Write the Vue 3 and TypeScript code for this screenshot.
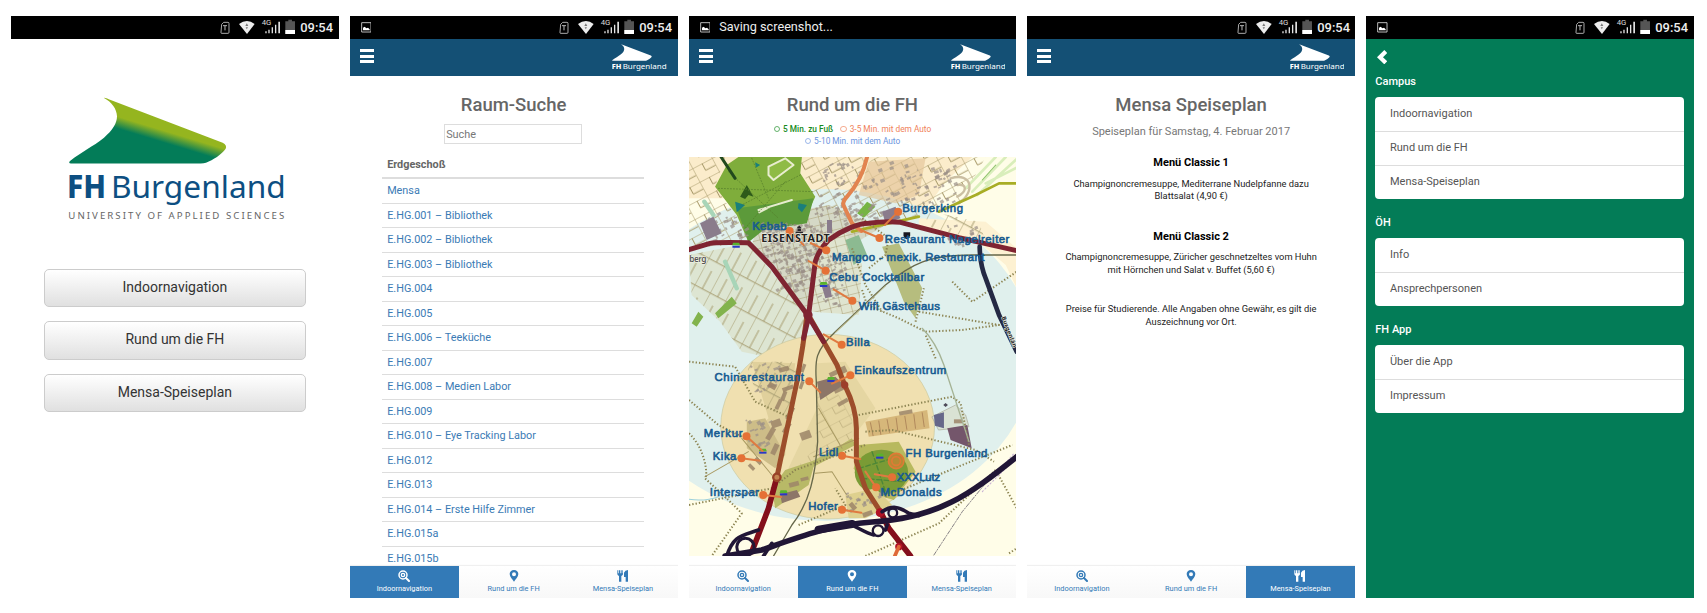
<script setup lang="ts">
type Kind = 'home' | 'rooms' | 'map' | 'menu' | 'drawer'

interface Screen {
  kind: Kind
  picture: boolean
  saving?: boolean
  title?: string
}

const screens: Screen[] = [
  { kind: 'home', picture: false },
  { kind: 'rooms', picture: true, title: 'Raum-Suche' },
  { kind: 'map', picture: true, saving: true, title: 'Rund um die FH' },
  { kind: 'menu', picture: false, title: 'Mensa Speiseplan' },
  { kind: 'drawer', picture: true },
]

const tabs: { kind: Kind; label: string }[] = [
  { kind: 'rooms', label: 'Indoornavigation' },
  { kind: 'map', label: 'Rund um die FH' },
  { kind: 'menu', label: 'Mensa-Speiseplan' },
]

const rooms = [
  'Mensa', 'E.HG.001 – Bibliothek', 'E.HG.002 – Bibliothek', 'E.HG.003 – Bibliothek',
  'E.HG.004', 'E.HG.005', 'E.HG.006 – Teeküche', 'E.HG.007', 'E.HG.008 – Medien Labor',
  'E.HG.009', 'E.HG.010 – Eye Tracking Labor', 'E.HG.012', 'E.HG.013',
  'E.HG.014 – Erste Hilfe Zimmer', 'E.HG.015a', 'E.HG.015b',
]

const groups = [
  { name: 'Campus', items: ['Indoornavigation', 'Rund um die FH', 'Mensa-Speiseplan'] },
  { name: 'ÖH', items: ['Info', 'Ansprechpersonen'] },
  { name: 'FH App', items: ['Über die App', 'Impressum'] },
]

// label, text x, baseline, text width, marker x/y, end of the pointer line
type Place = [string, number, number, number, number, number, number, number]
const places: Place[] = [
  ['Kebab', 201, 224, 103, 313, 228, 355, 270],
  ['Burgerking', 650, 172, 182, 638, 170, 598, 210],
  ['Restaurant Nagelreiter', 598, 264, 373, 582, 249, 525, 225],
  ['Mangoo - mexik. Restaurant', 440, 318, 456, 423, 286, 376, 264],
  ['Cebu Cocktailbar', 432, 377, 284, 421, 347, 370, 318],
  ['Wifi Gästehaus', 520, 466, 243, 501, 437, 445, 403],
  ['Billa', 482, 573, 71, 469, 569, 415, 538],
  ['Einkaufszentrum', 507, 656, 275, 495, 661, 440, 686],
  ['Chinarestaurant', 88, 678, 268, 372, 679, 405, 712],
  ['Merkur', 56, 846, 116, 184, 844, 232, 888],
  ['Kika', 83, 915, 71, 169, 910, 225, 917],
  ['Lidl', 401, 904, 58, 470, 902, 525, 912],
  ['FH Burgenland', 660, 906, 245, 632, 918, 632, 918],
  ['XXXLutz', 634, 978, 130, 620, 967, 568, 958],
  ['McDonalds', 585, 1024, 183, 572, 997, 540, 950],
  ['Interspar', 74, 1024, 148, 234, 1020, 288, 1026],
  ['Hofer', 369, 1064, 88, 470, 1064, 528, 1073],
]

const busStops = [[153, 272], [415, 390], [437, 675], [233, 890], [583, 905], [295, 1015]]

// deterministic scatter of building footprints inside a box
function scatter(x: number, y: number, w: number, h: number, count: number, seed: number) {
  let s = seed * 7919
  const next = () => ((s = (s * 16807) % 2147483647) / 2147483647)
  return Array.from({ length: count }, () => ({
    x: x + next() * w, y: y + next() * h, w: 4 + next() * 10, h: 4 + next() * 7, r: -35 + next() * 20,
  }))
}
const buildings = [
  ...scatter(225, 205, 190, 115, 170, 11),
  ...scatter(270, 320, 100, 85, 55, 5),
  ...scatter(385, 150, 200, 60, 45, 21),
  ...scatter(395, 300, 80, 150, 55, 8),
  ...scatter(60, 170, 120, 90, 35, 3),
  ...scatter(400, 20, 230, 130, 55, 15),
  ...scatter(640, 30, 170, 120, 50, 33),
  ...scatter(780, 200, 90, 70, 22, 18),
  ...scatter(190, 620, 90, 90, 20, 12),
  ...scatter(180, 790, 70, 90, 20, 7),
  ...scatter(480, 1005, 100, 60, 24, 10),
]
// larger halls: x, y, width, height, rotation
const halls = [
  [280, 640, 30, 14, -15], [255, 680, 24, 16, 30], [290, 700, 34, 12, -20], [285, 735, 30, 12, -70],
  [268, 760, 32, 12, -65], [300, 790, 40, 14, -65], [255, 800, 30, 22, -20], [290, 830, 34, 14, -60],
  [240, 850, 40, 15, -60], [255, 895, 34, 15, -65], [345, 650, 26, 10, -70], [340, 700, 24, 10, -70],
  [398, 700, 34, 16, -25], [430, 655, 30, 14, -25], [460, 640, 20, 20, -25], [445, 705, 40, 12, -25],
  [455, 745, 34, 12, -30], [342, 835, 32, 24, -20], [215, 905, 24, 12, 45], [195, 925, 22, 10, 45],
  [310, 985, 30, 14, -15], [345, 970, 24, 10, -15], [500, 1040, 24, 14, 50], [530, 1075, 30, 14, -20],
  [640, 770, 40, 12, -10], [805, 793, 26, 12, 0],
]
</script>

<template>
  <main class="board">
    <!-- shared logo artwork -->
    <svg class="defs" width="0" height="0" aria-hidden="true">
      <defs>
        <linearGradient id="sail" gradientUnits="userSpaceOnUse" x1="354" y1="350" x2="344" y2="383">
          <stop offset="0" stop-color="#95b51f" />
          <stop offset="1" stop-color="#037c58" />
        </linearGradient>
        <path id="sail-shape" d="M312 293.5Q318 294 330 299L668 428Q682 435 677 446C664 464 640 479 618 488Q612 490.500 602 490.500H213Q203 489 211 482C245 455 278 440 312 413C338 391 351 370 351 349C350 327 336 306 312 294Z" />
      </defs>
    </svg>

    <section v-for="s in screens" :key="s.kind" class="phone" :class="s.kind">
      <div class="status">
        <svg v-if="s.picture" class="pic" viewBox="0 0 32 32">
          <path d="M2 2H30V30H2Z" fill="none" stroke="#ddd" stroke-width="2.500" />
          <path d="M6 25V17L11 14L16 19L21 17L26 22V25Z" fill="#fff" />
        </svg>
        <span v-if="s.saving" class="saving">Saving screenshot...</span>
        <svg v-else class="signals" viewBox="653 48 364 69">
          <path d="M667 73L673 67H686Q689 67 689 70V97Q689 100 686 100H667Q664 100 665 97Z" fill="none" stroke="#ccc" stroke-width="2.500" />
          <path d="M671 77H683M677 78V91" stroke="#bbb" stroke-width="3" />
          <path d="M719 72Q743 54 766 72L743 102Z" fill="#ededed" />
          <path d="M738 78L742.500 70L747 78ZM739 82L742.500 88L746 82Z" fill="#777" />
          <text x="787" y="74" font-size="19" textLength="29" lengthAdjust="spacingAndGlyphs" fill="#ddd">4G</text>
          <path d="M798 94H802V100H798ZM807 89H811V100H807ZM817 82H821V100H817ZM827 74H831V100H827ZM837 65H842V100H837Z" fill="#e4e4e4" />
          <path d="M858 64H867V59H878V64H887V102H858Z" fill="#555" />
          <path d="M858 90H887V102H858Z" fill="#fff" />
          <text x="903" y="97" font-size="40" font-weight="500" textLength="98" lengthAdjust="spacingAndGlyphs" fill="#eee">09:54</text>
        </svg>
      </div>

      <template v-if="s.kind === 'home'">
        <svg class="biglogo" viewBox="195 285 660 380">
          <use href="#sail-shape" fill="url(#sail)" />
          <g fill="#0d4f82" class="word">
            <text x="201" y="593" font-size="94" font-weight="800" textLength="117" lengthAdjust="spacingAndGlyphs">FH</text>
            <text x="333" y="593" font-size="94" textLength="524" lengthAdjust="spacingAndGlyphs">Burgenland</text>
          </g>
          <text class="word" x="205" y="656" font-size="29" textLength="648" fill="#666">UNIVERSITY OF APPLIED SCIENCES</text>
        </svg>
        <div class="choices">
          <button v-for="t in tabs" :key="t.label" type="button">{{ t.label }}</button>
        </div>
      </template>

      <template v-else-if="s.kind === 'drawer'">
        <svg class="back" viewBox="0 0 31 43"><path d="M22 0L31 9L18 21.500L31 34L22 43L0 21.500Z" fill="#fff" /></svg>
        <div v-for="g in groups" :key="g.name" class="group">
          <h2>{{ g.name }}</h2>
          <ul><li v-for="i in g.items" :key="i">{{ i }}</li></ul>
        </div>
      </template>

      <template v-else>
        <header class="bar">
          <div class="burger"><i /><i /><i /></div>
          <svg class="smalllogo" viewBox="205 290 650 325">
            <use href="#sail-shape" fill="#fff" />
            <g fill="#fff" class="word">
              <text x="202" y="593" font-size="92" font-weight="800" textLength="115" lengthAdjust="spacingAndGlyphs">FH</text>
              <text x="332" y="593" font-size="92" textLength="524" lengthAdjust="spacingAndGlyphs">Burgenland</text>
            </g>
          </svg>
        </header>

        <div class="content">
          <h1>{{ s.title }}</h1>

          <template v-if="s.kind === 'rooms'">
            <input class="search" type="text" placeholder="Suche">
            <div class="table">
              <div class="thead">Erdgeschoß</div>
              <div v-for="r in rooms" :key="r" class="row">{{ r }}</div>
            </div>
          </template>

          <template v-else-if="s.kind === 'map'">
            <div class="legend">
              <div><span class="foot"><i />5 Min. zu Fuß</span><span class="near"><i />3-5 Min. mit dem Auto</span></div>
              <div><span class="far"><i />5-10 Min. mit dem Auto</span></div>
            </div>
            <svg class="citymap" viewBox="12 6 981 1197" preserveAspectRatio="none">
              <defs>
                <pattern id="blocks" width="66" height="46" patternUnits="userSpaceOnUse" patternTransform="rotate(-28)">
                  <path d="M0 0H66M0 0V46M33 0V24M33 24H66" fill="none" stroke="#a99b6b" stroke-width="3" />
                </pattern>
                <pattern id="lanes" width="52" height="90" patternUnits="userSpaceOnUse" patternTransform="rotate(28)">
                  <path d="M0 0V90M26 0V60M0 60H52" fill="none" stroke="#a89e72" stroke-width="3" />
                </pattern>
                <pattern id="town" width="31" height="25" patternUnits="userSpaceOnUse" patternTransform="rotate(-14)">
                  <path d="M0 0H31M0 0V25" fill="none" stroke="#a79c70" stroke-width="3" />
                </pattern>
                <clipPath id="frame"><path d="M12 6H993V1203H12Z" /></clipPath>
              </defs>
              <g clip-path="url(#frame)" fill="none" stroke-linecap="round" stroke-linejoin="round">
                <path d="M12 6H993V1203H12Z" fill="#fffde8" />
                <path d="M12 6H860L780 80L700 190L500 190L390 130H12Z" fill="#fbeccb" />
                <ellipse cx="420" cy="600" rx="625" ry="498" fill="#e0f0ed" />
                <path d="M700 190L900 200L993 280V400L960 330L880 262L700 215Z" fill="#fdf1d2" />
                <!-- districts -->
                <path d="M225 190L430 150L520 190L600 210L500 270L400 330L370 470L200 270Z" fill="#d5d8c6" />
                <path d="M225 190L430 150L520 190L600 210L500 270L400 330L370 470L200 270Z" fill="url(#town)" />
                <path d="M395 260L480 230L530 330L520 480L380 470Z" fill="#dfe4cf" />
                <path d="M395 260L480 230L530 330L520 480L380 470Z" fill="url(#town)" />
                <path d="M12 6H120L90 95L150 180L190 265L12 280Z" fill="url(#blocks)" />
                <path d="M330 6H545L530 90L475 135L500 195L390 130Z" fill="url(#blocks)" />
                <path d="M560 6H900L820 150L700 190L540 190L500 145Z" fill="url(#blocks)" />
                <path d="M550 20L720 10L700 120L630 145L520 120Z" fill="#e3c498" opacity=".65" />
                <path d="M715 165L880 200L900 260L730 215Z" fill="url(#lanes)" />
                <path d="M190 265L365 480L340 625L170 590L105 500L20 420L12 300Z" fill="#dde5d2" />
                <path d="M190 265L365 480L340 625L170 590L105 500L20 420L12 300Z" fill="url(#lanes)" />
                <!-- park -->
                <path d="M160 6H350L345 55L390 125L360 190L215 215L190 262L155 180L90 95L125 30Z" fill="#7fad3b" />
                <path d="M155 160L385 130L365 205L235 225L190 262Z" fill="#5c9a3a" />
                <path d="M250 35L300 10L325 30L265 75L250 60Z" fill="#8fbb45" stroke="#e9edcf" stroke-width="6" />
                <path d="M165 125L185 90L205 125L190 120L180 132Z" fill="#2e5b1a" />
                <path d="M150 140L180 150L155 172ZM340 145L365 150L350 172L338 160ZM210 22L225 30L212 38Z" fill="#197f7b" />
                <path d="M220 165L320 135M222 172L250 158" stroke="#e6ecce" stroke-width="6" />
                <path d="M100 100L385 110M130 50L280 190M300 80L180 220M345 60L170 150M200 10L250 130" stroke="#537a2b" stroke-width="2" stroke-dasharray="3 6" />
                <path d="M108 6L150 70" stroke="#22491d" stroke-width="9" />
                <!-- fields -->
                <path d="M590 275L640 265L710 400L690 490L715 525L655 440Z" fill="#b6bd7e" />
                <path d="M515 175L545 140L570 155L535 188Z" fill="#76b444" />
                <path d="M480 255L520 240L545 300L505 330Z" fill="#8cba91" />
                <path d="M90 475L140 425L155 445L100 490ZM20 505L40 470L55 485L35 515Z" fill="#82b34d" />
                <path d="M58 140L85 180M120 320L155 400" stroke="#a8d5b8" stroke-width="13" />
                <path d="M860 110L960 6M875 120L993 12M900 85L993 38M840 100L930 6" stroke="#d9eebb" stroke-width="8" />
                <path d="M890 75L930 30" stroke="#8cc068" stroke-width="3" />
                <path d="M795 70C860 50 870 110 820 145M815 90C845 85 845 110 815 125" stroke="#cbbfa2" stroke-width="7" />
                <path d="M760 170L870 120L940 85L993 85M500 230L700 185" stroke="#a8ad25" stroke-width="8" />
                <!-- inner zone -->
                <ellipse cx="427" cy="815" rx="320" ry="277" fill="#f0e0b0" stroke="#c8c9a0" stroke-width="2" />
                <path d="M200 620L330 625L300 900L180 860L250 790Z" fill="#e0d09c" />
                <path d="M395 625L480 620L570 760L500 850L300 960L395 760Z" fill="#e5d6a2" />
                <path d="M180 620L345 620L310 780L230 760Z" fill="url(#lanes)" />
                <path d="M395 700L500 730L500 860L310 960L390 880Z" fill="url(#blocks)" opacity=".5" />
                <path d="M300 945L390 915L500 850L510 870L385 935L370 990L270 1060L260 1000Z" fill="#b8b967" />
                <path d="M185 800L240 790L300 900L270 940L185 880Z" fill="#cdbd88" />
                <path d="M540 800L725 765L732 820L550 845Z" fill="#d6b77a" />
                <path d="M555 803L563 842M580 798L586 838M605 794L612 832M632 789L637 828M658 784L664 823M685 779L690 820M710 773L716 815" stroke="#a88055" stroke-width="2.500" />
                <path d="M740 785L810 750L840 780L850 815L760 825Z" fill="#d9e2d4" stroke="#a7a895" stroke-width="2" />
                <path d="M745 780L775 772V820L748 812Z" fill="#666789" />
                <path d="M785 820L845 810L858 880L795 855Z" fill="#74566b" />
                <path d="M385 905L520 850M390 955L440 950L490 1030M400 760L470 880M60 965L190 890M170 850L260 960" stroke="#a99a62" stroke-width="3" />
                <!-- campus -->
                <path d="M520 870L640 860L690 950L625 1035L540 1010L505 940Z" fill="#b8b95e" />
                <ellipse cx="588" cy="952" rx="80" ry="68" fill="#7a9b35" />
                <path d="M520 940L640 905M530 970L650 980M560 890L600 1010" stroke="#4d8737" stroke-width="4" stroke-dasharray="14 8" />
                <path d="M480 1020L570 1000L620 1050L540 1090L490 1090Z" fill="#ded08e" />
                <rect v-for="(b, i) in buildings" :key="i" :x="b.x" :y="b.y" :width="b.w" :height="b.h" :transform="`rotate(${b.r} ${b.x} ${b.y})`" fill="#9a8f88" opacity=".7" />
                <rect v-for="(h, i) in halls" :key="'h' + i" :x="h[0]" :y="h[1]" :width="h[2]" :height="h[3]" :transform="`rotate(${h[4]} ${h[0]} ${h[1]})`" fill="#9c8568" opacity=".85" />
                <path d="M45 205L85 185L110 235L65 255ZM590 170L630 155L645 190L600 205ZM425 195H440V235H425ZM410 395L432 385L440 425L420 430Z" fill="#8a7c8c" />
                <path d="M395 680L450 665L475 690L405 735ZM285 1018L335 1005L345 1025L290 1045Z" fill="#8d7668" />
                <!-- footpaths -->
                <g stroke="#8c8452" stroke-width="6" stroke-dasharray="4 6" stroke-linecap="butt">
                  <path d="M12 620L150 635L210 740L320 790M12 735L100 810L190 855M12 835C60 880 70 960 60 970L130 1035L170 1075L80 1203M12 1050L260 1000L330 945L540 870M340 1110L480 1050L450 1000M520 780L800 725L825 745L850 870M540 830L620 825L870 885L925 920M600 1025L830 930L980 870M540 1203L760 1105L930 945L993 1060M970 1195L993 1180M530 405L545 450L640 490L720 530L830 525L940 510L880 500L700 470M690 500L715 400M800 380L860 440L993 350M750 610L720 540" />
                  <path d="M500 280L540 390L590 470M530 190L610 250L600 300L550 340" />
                </g>
                <path d="M710 520Q750 560 775 630L850 860" stroke="#a5b395" stroke-width="4" />
                <path d="M745 1200L830 1070L920 960" stroke="#6c6670" stroke-width="2.500" stroke-dasharray="12 5 3 5" />
                <path d="M915 975L985 895M890 1010L970 930" stroke="#c5afd3" stroke-width="3" stroke-dasharray="4 7" />
                <!-- railway -->
                <path d="M993 300H860C730 300 680 325 600 390L450 530C385 590 390 620 393 680L397 860C390 960 375 1040 320 1110L265 1203" stroke="#666749" stroke-width="4" />
                <path d="M600 393L450 533" stroke="#b9b788" stroke-width="3" />
                <!-- roads -->
                <path d="M545 6C535 50 520 85 485 125Q470 142 475 152L500 205L528 228" stroke="#e28450" stroke-width="12" />
                <path d="M12 284L75 265Q90 261 190 263L260 335L365 478M370 480L390 320Q400 285 430 255C470 225 520 205 550 205Q600 198 645 202L820 248L993 287" stroke="#7f2431" stroke-width="15" />
                <path d="M365 480L353 570L335 680L275 967M375 490L455 630L478 690Q513 760 513 820V920L540 1000L585 1070" stroke="#9c4d2b" stroke-width="15" />
                <path d="M275 967L250 1060L200 1190M585 1070L610 1120L675 1203" stroke="#840f1b" stroke-width="17" />
                <path d="M355 550L370 485L415 560" stroke="#7f2431" stroke-width="15" />
                <circle cx="368" cy="480" r="14" fill="#7f2431" />
                <circle cx="275" cy="967" r="11" fill="#c38350" stroke="#984127" stroke-width="7" />
                <circle cx="478" cy="690" r="11" fill="#9c3e2b" />
                <circle cx="584" cy="1073" r="13" fill="#b11326" />
                <circle cx="640" cy="1175" r="11" fill="#b11326" />
                <path d="M640 1175L628 1203" stroke="#df6938" stroke-width="11" />
                <path d="M882 275Q883 330 900 370L940 480L993 590" stroke="#242944" stroke-width="14" />
                <path d="M120 1203L230 1185C330 1150 430 1110 560 1101C760 1088 850 1020 993 905" stroke="#211636" stroke-width="17" />
                <path d="M400 1124L500 1107" stroke="#211636" stroke-width="24" />
                <path d="M125 1203C145 1140 170 1143 220 1125M235 1203L260 1165M500 1110C530 1125 545 1135 565 1140M600 1125L605 1110M590 1070C620 1050 640 1055 670 1075L700 1082" stroke="#211636" stroke-width="11" />
                <circle cx="181" cy="1176" r="26" stroke="#211636" stroke-width="9" />
                <circle cx="578" cy="1127" r="16" stroke="#211636" stroke-width="7" />
                <circle cx="622" cy="1074" r="13" stroke="#211636" stroke-width="7" />
                <path d="M12 1033Q60 1040 100 1025" stroke="#9dd0da" stroke-width="3" />

                <path d="M654 232H674V242Q671 250 664 253Q656 249 654 242Z" fill="#17171e" />
                <path d="M334 220L342 212L350 220ZM337 221H347V228H337ZM331 230H353V234H331Z" fill="#26222a" />
                <path d="M780 744L787 750L780 756L773 750Z" fill="#4d4a58" />
                <g v-for="(b, i) in busStops" :key="'b' + i">
                  <path :d="`M${b[0] - 9} ${b[1] - 9}h18l3 8h-24z`" fill="#58b32e" />
                  <path :d="`M${b[0] - 11} ${b[1]}h22v6h-22z`" fill="#2938c5" />
                </g>
                <!-- points of interest -->
                <g v-for="p in places" :key="p[0]">
                  <path :d="`M${p[4]} ${p[5]}L${p[6]} ${p[7]}`" stroke="#df7a41" stroke-width="6" />
                  <circle v-if="p[0] !== 'FH Burgenland'" :cx="p[4]" :cy="p[5]" r="12" fill="#e57136" />
                </g>
                <circle cx="632" cy="918" r="23" fill="#b58a34" stroke="#df7a35" stroke-width="5" />
                <circle cx="632" cy="918" r="13" stroke="#df7a35" stroke-width="5" />
                <g stroke="none">
                  <text class="town" x="228" y="262" font-size="32" textLength="205">EISENSTADT</text>
                  <text class="town faint" x="13" y="320" font-size="25" textLength="51">berg</text>
                  <text class="town" x="0" y="0" font-size="18" textLength="98" transform="translate(947 487) rotate(69)">Burgenlän</text>
                  <text v-for="p in places" :key="p[0]" class="poi" :x="p[1]" :y="p[2]" font-size="34" :textLength="p[3]">{{ p[0] }}</text>
                </g>
              </g>
            </svg>
          </template>

          <template v-else>
            <p class="date">Speiseplan für Samstag, 4. Februar 2017</p>
            <h3>Menü Classic 1</h3>
            <p class="dish">Champignoncremesuppe, Mediterrane Nudelpfanne dazu<br>Blattsalat (4,90 €)</p>
            <h3>Menü Classic 2</h3>
            <p class="dish">Champignoncremesuppe, Züricher geschnetzeltes vom Huhn<br>mit Hörnchen und Salat v. Buffet (5,60 €)</p>
            <p class="dish note">Preise für Studierende. Alle Angaben ohne Gewähr, es gilt die<br>Auszeichnung vor Ort.</p>
          </template>
        </div>

        <nav class="tabs">
          <div v-for="t in tabs" :key="t.kind" class="tab" :class="{ active: t.kind === s.kind }">
            <svg viewBox="0 0 36 36">
              <template v-if="t.kind === 'rooms'">
                <circle cx="15" cy="15" r="12" fill="none" stroke="currentColor" stroke-width="4.500" />
                <circle cx="15" cy="15" r="5" fill="none" stroke="currentColor" stroke-width="4" />
                <path d="M24 24L33 33" stroke="currentColor" stroke-width="6" stroke-linecap="round" />
              </template>
              <path v-else-if="t.kind === 'map'" fill="currentColor" fill-rule="evenodd" d="M18 0C10 0 5 6 5 12C5 20 13 28 18 35C23 28 31 20 31 12C31 6 26 0 18 0ZM18 7A6 6 0 1 1 18 19A6 6 0 1 1 18 7Z" />
              <path v-else fill="currentColor" d="M1 1H4V10H6V1H9V10H11V1H14V10H16V1H18V13Q17 17 13 18V35H6V18Q2 17 1 13ZM33 0V35H26V21H21V8Q24 1 33 0Z" />
            </svg>
            <span>{{ t.label }}</span>
          </div>
        </nav>
      </template>
    </section>
  </main>
</template>

<style>
html, body { margin: 0; background: #fff; overflow: hidden; }
</style>

<style scoped>
.board {
  box-sizing: border-box;
  width: 1707px;
  height: 613px;
  padding: 16px 13px 15px 11px;
  display: grid;
  grid-template-columns: repeat(5, 327.75px);
  column-gap: 11px;
  font-family: Roboto, "Liberation Sans", sans-serif;
  color: #666;
  position: relative;
}
.defs { position: absolute; }
.phone { height: 582px; display: flex; flex-direction: column; overflow: hidden; }
.status { height: 23px; flex: none; background: #000; display: flex; align-items: center; }
.pic { width: 10.700px; height: 10.700px; margin-left: 11px; }
.saving { color: #eee; font-size: 12.700px; margin-left: 9px; padding-bottom: 2px; line-height: 21px; }
.signals { width: 121.300px; height: 23px; margin-left: auto; }
.word { font-family: "Noto Sans", "Open Sans", sans-serif; }

.biglogo { width: 220px; height: 126.700px; margin: 56px auto 0; flex: none; }
.choices { margin: 47px 33px 0; display: flex; flex-direction: column; gap: 14.500px; }
.choices button {
  height: 38.200px;
  padding: 0 0 2px;
  border: 1px solid #ccc;
  border-radius: 5px;
  background: linear-gradient(#fff, #e0e0e0);
  color: #333;
  font: 14px Roboto, sans-serif;
}

.bar { height: 37px; flex: none; background: #145075; display: flex; justify-content: space-between; align-items: flex-start; }
.burger { margin: 10px 0 0 10px; display: flex; flex-direction: column; gap: 2.500px; }
.burger i { width: 14px; height: 3px; background: #fff; }
.smalllogo { width: 54.500px; height: 27.300px; margin: 4.500px 11px 0 0; }

.content { flex: 1; min-height: 0; overflow: hidden; display: flex; flex-direction: column; align-items: center; }
h1 { margin: 17px 0 0; height: 24px; line-height: 24px; font-size: 18.500px; font-weight: 500; color: #666; }
.search {
  box-sizing: border-box;
  width: 138px;
  height: 20px;
  margin: 7px 1px 0 0;
  padding: 0 1px;
  border: 1px solid #ddd;
  font: 10.900px Roboto, sans-serif;
  flex: none;
}
.search::placeholder { color: #777; opacity: 1; }
.table { width: 262px; margin-right: 1px; font-size: 10.850px; }
.thead { height: 33px; box-sizing: content-box; padding-left: 5px; line-height: 42px; font-weight: 700; border-bottom: 2px solid #ddd; }
.row { box-sizing: border-box; height: 24.530px; line-height: 23px; padding-left: 5px; border-bottom: 1px solid #ddd; color: #3b7bb5; }

.legend { margin-top: 6px; height: 34px; line-height: 12px; font-size: 8.300px; text-align: center; flex: none; white-space: nowrap; }
.legend i { display: inline-block; width: 4.500px; height: 4.500px; border: 1px solid; border-radius: 50%; margin-right: 3px; opacity: .65; }
.legend span { display: inline-block; }
.foot { color: #168a20; font-weight: 500; }
.near { color: #f08159; margin-left: 7px; }
.far { color: #6a94de; }
.citymap { width: 100%; height: 399px; flex: none; }
.town { font-family: "Noto Sans", sans-serif; font-weight: 700; fill: #222; stroke: #f5f5e9; stroke-width: 3px; paint-order: stroke; }
.town.faint { fill: #555; font-weight: 600; }
.poi { font-family: "Liberation Sans", sans-serif; fill: #175b91; stroke: #175b91; stroke-width: 1.800px; }

p { margin: 0; text-align: center; }
.date { margin-top: 6px; font-size: 11px; line-height: 17px; color: #777; }
h3 { margin: 16px 0 0; height: 14px; line-height: 14px; font-size: 11px; font-weight: 700; color: #000; }
.dish { margin-top: 7.500px; font-size: 9.300px; line-height: 12.600px; color: #222; white-space: nowrap; }
.dish + h3 { margin-top: 27px; }
.note { margin-top: 27px; }

.tabs { height: 32px; flex: none; display: grid; grid-template-columns: repeat(3, 1fr); background: linear-gradient(#fff, #f8f8f8); box-shadow: 0 -1px 1px #f0f0f0; }
.tab { display: flex; flex-direction: column; align-items: center; color: #337ab7; font-size: 7.400px; line-height: 10px; }
.tab svg { width: 12px; height: 12px; margin: 4px 0 2px; }
.tab.active { background: #337ab7; color: #fff; }

.drawer { background: #037c57; }
.back { width: 10.300px; height: 14.300px; margin: 10.500px 0 0 10.700px; flex: none; }
.group { margin: 9px 9.300px 15px; }
.group + .group { margin-top: 0; }
.group h2 { margin: 0; height: 24.500px; line-height: 18px; font-size: 11px; font-weight: 500; color: #fff; }
.group ul { margin: 0; padding: 0; list-style: none; border-radius: 4px; background: #fff; }
.group li { box-sizing: border-box; height: 33.800px; line-height: 33.500px; padding-left: 14.700px; font-size: 11px; color: #555; }
.group li + li { border-top: 1px solid #ddd; line-height: 32.500px; }
</style>
